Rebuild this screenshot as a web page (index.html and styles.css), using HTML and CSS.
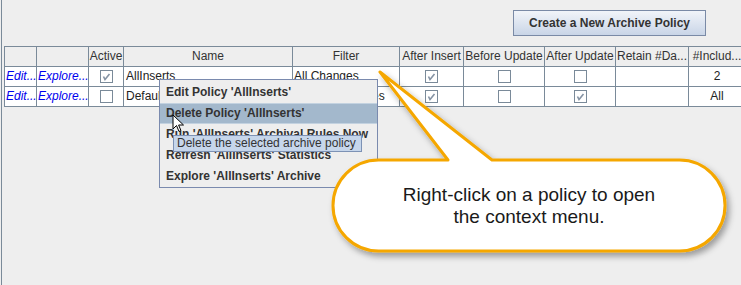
FILE: index.html
```html
<!DOCTYPE html>
<html>
<head>
<meta charset="utf-8">
<link rel="stylesheet" href="styles.css">
</head>
<body>
<div class="panel">
  <div class="toolbar">
    <button class="btn">Create a New Archive Policy</button>
  </div>
  <div class="grid">
    <div class="hd"></div><div class="hd"></div><div class="hd">Active</div><div class="hd">Name</div><div class="hd">Filter</div><div class="hd">After Insert</div><div class="hd">Before Update</div><div class="hd">After Update</div><div class="hd">Retain #Da...</div><div class="hd">#Includ...</div>

    <div class="c link">Edit...</div><div class="c link">Explore...</div><div class="c ctr"><span class="cb on"><svg viewBox="0 0 13 13" width="13" height="13"><path d="M3.5 6.5 L5 9.5 L9.5 4" /></svg></span></div><div class="c txt">AllInserts</div><div class="c txt1">All Changes</div><div class="c ctr"><span class="cb on"><svg viewBox="0 0 13 13" width="13" height="13"><path d="M3.5 6.5 L5 9.5 L9.5 4" /></svg></span></div><div class="c ctr"><span class="cb"></span></div><div class="c ctr"><span class="cb"></span></div><div class="c"></div><div class="c ctr">2</div>

    <div class="c link">Edit...</div><div class="c link">Explore...</div><div class="c ctr"><span class="cb"></span></div><div class="c txt">DefaultPolicy</div><div class="c txt1">Inserts / Updates</div><div class="c ctr"><span class="cb on"><svg viewBox="0 0 13 13" width="13" height="13"><path d="M3.5 6.5 L5 9.5 L9.5 4" /></svg></span></div><div class="c ctr"><span class="cb"></span></div><div class="c ctr"><span class="cb on"><svg viewBox="0 0 13 13" width="13" height="13"><path d="M3.5 6.5 L5 9.5 L9.5 4" /></svg></span></div><div class="c"></div><div class="c ctr">All</div>
  </div>
</div>

<div class="menu">
  <div class="mi">Edit Policy 'AllInserts'</div>
  <div class="mi sel">Delete Policy 'AllInserts'</div>
  <div class="mi">Run 'AllInserts' Archival Rules Now</div>
  <div class="mi">Refresh 'AllInserts' Statistics</div>
  <div class="mi">Explore 'AllInserts' Archive</div>
</div>

<svg class="cursor" width="14" height="20" viewBox="0 0 14 20">
  <path d="M1 1 L1 15 L4.5 11.5 L7 17.5 L9 16.6 L6.6 11 L11.5 11 Z" fill="#fff" stroke="#000" stroke-width="1" stroke-linejoin="round"/>
</svg>

<div class="tip">Delete the selected archive policy</div>

<svg class="callout" width="741" height="285" viewBox="0 0 741 285">
  <defs>
    <filter id="sh" x="-10%" y="-10%" width="130%" height="140%">
      <feDropShadow dx="3" dy="4" stdDeviation="3" flood-color="#000" flood-opacity="0.35"/>
    </filter>
  </defs>
  <path d="M378.5 160 L448 160 L380 72 L492 160 L679.5 160 A45.5 45.5 0 0 1 679.5 251 L378.5 251 A45.5 45.5 0 0 1 378.5 160 Z" fill="#fff" stroke="#f5a700" stroke-width="3" stroke-linejoin="round" filter="url(#sh)"/>
</svg>
<div class="callout-text">Right-click on a policy to open<br>the context menu.</div>
</body>
</html>
```

FILE: styles.css
```css
html, body {
  margin: 0;
  padding: 0;
  background: #eeeeee;
  font-family: "Liberation Sans", Arial, sans-serif;
  font-size: 12px;
  color: #333;
  overflow: hidden;
}
body {
  width: 741px;
  height: 285px;
  position: relative;
  padding-left: 1px;
  box-sizing: border-box;
}
.panel {
  height: 285px;
  border-left: 1px solid #7a8a99;
  padding-left: 2px;
  overflow: hidden;
}
.toolbar {
  height: 46px;
  display: flex;
  justify-content: flex-end;
  align-items: flex-start;
  padding-right: 35px;
  box-sizing: border-box;
  padding-top: 10px;
}
.btn {
  width: 193px;
  height: 26px;
  border: 1px solid #7a8aa6;
  background: linear-gradient(#f1f4f9, #c9d5e7);
  font-family: "Liberation Sans", Arial, sans-serif;
  font-weight: bold;
  font-size: 12px;
  color: #333;
  padding: 0;
  margin: 0;
}
.grid {
  display: grid;
  grid-template-columns: 31px 51px 34px 168px 106px 63px 80px 70px 72px 56px;
  grid-auto-rows: 19px;
  gap: 1px;
  border: 1px solid #7a8a99;
  background: #7a8a99;
  width: max-content;
}
.hd {
  background: #eeeeee;
  text-align: center;
  line-height: 19px;
  white-space: nowrap;
  overflow: hidden;
  color: #333;
}
.c {
  background: #fff;
  line-height: 19px;
  white-space: nowrap;
  overflow: hidden;
  color: #222;
}
.link {
  color: #0000ee;
  font-style: italic;
  padding-left: 1px;
}
.txt { padding-left: 2px; }
.txt1 { padding-left: 1px; }
.ctr {
  display: flex;
  justify-content: center;
  align-items: center;
}
.cb {
  width: 13px;
  height: 13px;
  box-sizing: border-box;
  border: 1px solid #7a8a99;
  background: #fff;
  display: block;
  position: relative;
}
.cb svg {
  position: absolute;
  left: -1px;
  top: -1px;
}
.cb svg path {
  fill: none;
  stroke: #8593a4;
  stroke-width: 1.6;
}
.menu {
  position: absolute;
  left: 159px;
  top: 79px;
  width: 219px;
  box-sizing: border-box;
  border: 1px solid #7a8aae;
  background: #eeeeee;
  padding-top: 2px;
}
.mi {
  height: 21px;
  line-height: 21px;
  padding-left: 6px;
  font-weight: bold;
  color: #333;
  white-space: nowrap;
  overflow: hidden;
}
.mi.sel {
  background: #a3b8cc;
  box-shadow: inset 0 1px 0 #c3d2e0, inset 0 -1px 0 #c3d2e0;
}
.cursor {
  position: absolute;
  left: 172px;
  top: 114px;
}
.tip {
  position: absolute;
  left: 173px;
  top: 135px;
  width: 189px;
  height: 17px;
  box-sizing: border-box;
  border: 1px solid #7d92b5;
  background: #c6d6eb;
  line-height: 15px;
  padding-left: 3px;
  color: #333;
  white-space: nowrap;
}
.callout {
  position: absolute;
  left: 0;
  top: 0;
  pointer-events: none;
}
.callout-text {
  position: absolute;
  left: 333px;
  top: 160px;
  width: 392px;
  height: 91px;
  display: flex;
  align-items: center;
  justify-content: center;
  text-align: center;
  font-size: 19px;
  line-height: 22px;
  color: #1a1a1a;
}
```
